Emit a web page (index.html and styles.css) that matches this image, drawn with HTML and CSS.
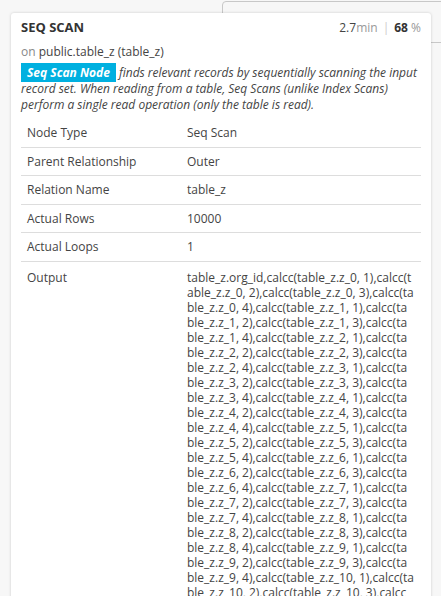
FILE: index.html
```html
<!DOCTYPE html>
<html>
<head>
<meta charset="utf-8">
<link rel="stylesheet" href="styles.css">
</head>
<body>
<div class="stage">
  <div class="behind"></div>
  <div class="card">
    <div class="head">
      <div class="title">SEQ SCAN</div>
      <div class="stats"><span class="num">2.7</span><span class="unit">min</span><span class="sep">|</span><span class="pct">68</span><span class="unit"> %</span></div>
    </div>
    <div class="sub"><span class="on">on</span> public.table_z (table_z)</div>
    <div class="desc"><span class="badge">Seq Scan Node</span> finds relevant records by sequentially scanning the input record set. When reading from a table, Seq Scans (unlike Index Scans) perform a single read operation (only the table is read).</div>
    <table class="props">
      <tr><td class="k">Node Type</td><td class="v">Seq Scan</td></tr>
      <tr><td class="k">Parent Relationship</td><td class="v">Outer</td></tr>
      <tr><td class="k">Relation Name</td><td class="v">table_z</td></tr>
      <tr><td class="k">Actual Rows</td><td class="v">10000</td></tr>
      <tr><td class="k">Actual Loops</td><td class="v">1</td></tr>
      <tr class="out"><td class="k">Output</td><td class="v">table_z.org_id,calcc(table_z.z_0, 1),calcc(table_z.z_0, 2),calcc(table_z.z_0, 3),calcc(table_z.z_0, 4),calcc(table_z.z_1, 1),calcc(table_z.z_1, 2),calcc(table_z.z_1, 3),calcc(table_z.z_1, 4),calcc(table_z.z_2, 1),calcc(table_z.z_2, 2),calcc(table_z.z_2, 3),calcc(table_z.z_2, 4),calcc(table_z.z_3, 1),calcc(table_z.z_3, 2),calcc(table_z.z_3, 3),calcc(table_z.z_3, 4),calcc(table_z.z_4, 1),calcc(table_z.z_4, 2),calcc(table_z.z_4, 3),calcc(table_z.z_4, 4),calcc(table_z.z_5, 1),calcc(table_z.z_5, 2),calcc(table_z.z_5, 3),calcc(table_z.z_5, 4),calcc(table_z.z_6, 1),calcc(table_z.z_6, 2),calcc(table_z.z_6, 3),calcc(table_z.z_6, 4),calcc(table_z.z_7, 1),calcc(table_z.z_7, 2),calcc(table_z.z_7, 3),calcc(table_z.z_7, 4),calcc(table_z.z_8, 1),calcc(table_z.z_8, 2),calcc(table_z.z_8, 3),calcc(table_z.z_8, 4),calcc(table_z.z_9, 1),calcc(table_z.z_9, 2),calcc(table_z.z_9, 3),calcc(table_z.z_9, 4),calcc(table_z.z_10, 1),calcc(table_z.z_10, 2),calcc(table_z.z_10, 3),calcc(table_z.z_10, 4),calcc(table_z.z_11, 1),calcc(table_z.z_11, 2)</td></tr>
    </table>
  </div>
</div>
</body>
</html>
```

FILE: styles.css
```css
html, body {
  margin: 0;
  padding: 0;
  background: #f7f7f7;
  overflow: hidden;
  height: 596px;
}
body {
  font-family: "Open Sans", sans-serif;
  color: #444;
  font-size: 12px;
}
.stage {
  position: relative;
  padding: 13px 10px 0 11px;
}
.behind {
  position: absolute;
  left: 222px;
  top: 1px;
  width: 260px;
  height: 40px;
  border: 1px solid #c8c8c8;
  border-radius: 4px;
  background: #f7f7f7;
}
.card {
  position: relative;
  background: #fff;
  border-radius: 3px;
  box-shadow: 0 0 3px rgba(0,0,0,0.18);
  padding: 5px 10px 0 10px;
  height: 700px;
}
.head {
  display: flex;
  justify-content: space-between;
  align-items: baseline;
}
.title {
  font-weight: 700;
  font-size: 13px;
  color: #333;
}
.stats {
  font-size: 12px;
  color: #444;
}
.unit { color: #999; }
.sep { color: #ccc; margin: 0 5px; }
.pct { font-weight: 700; color: #333; }
.sub {
  margin-top: 7px;
  font-size: 12px;
  color: #444;
}
.on { color: #888; }
.desc {
  margin-top: 5px;
  font-style: italic;
  font-size: 12px;
  line-height: 16px;
  color: #444;
}
.badge {
  background: #00b0e0;
  color: #fff;
  font-weight: 700;
  padding: 1px 6px;
}
.props {
  margin-top: 6px;
  width: 100%;
  border-collapse: collapse;
}
.props td {
  padding: 6.25px 7px 6.25px 6px;
  border-bottom: 1px solid #ddd;
  vertical-align: top;
  line-height: 15px;
}
.props .k { width: 147px; }
.props .v { word-break: break-all; }
.props tr.out td { border-bottom: none; padding-top: 8px; }
```
